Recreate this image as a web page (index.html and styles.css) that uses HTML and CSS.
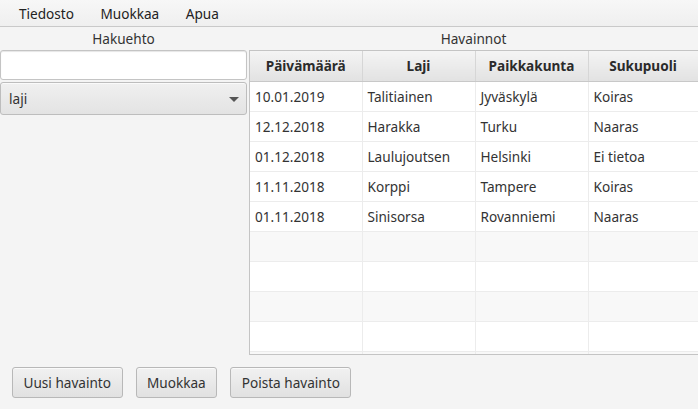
FILE: index.html
```html
<!DOCTYPE html>
<html lang="fi">
<head>
<meta charset="utf-8">
<title>Havainnot</title>
<link rel="stylesheet" href="styles.css">
</head>
<body>
<div class="app">
  <nav class="menubar">
    <span class="menu">Tiedosto</span>
    <span class="menu">Muokkaa</span>
    <span class="menu">Apua</span>
  </nav>
  <div class="main">
    <section class="left">
      <div class="caption">Hakuehto</div>
      <input class="field" type="text">
      <div class="combo"><span>laji</span><span class="arrow"></span></div>
    </section>
    <section class="right">
      <div class="caption">Havainnot</div>
      <div class="tablewrap">
        <table class="grid">
          <thead>
            <tr><th class="first">Päivämäärä</th><th>Laji</th><th>Paikkakunta</th><th class="last">Sukupuoli</th></tr>
          </thead>
          <tbody>
            <tr><td>10.01.2019</td><td>Talitiainen</td><td>Jyväskylä</td><td>Koiras</td></tr>
            <tr><td>12.12.2018</td><td>Harakka</td><td>Turku</td><td>Naaras</td></tr>
            <tr><td>01.12.2018</td><td>Laulujoutsen</td><td>Helsinki</td><td>Ei tietoa</td></tr>
            <tr><td>11.11.2018</td><td>Korppi</td><td>Tampere</td><td>Koiras</td></tr>
            <tr><td>01.11.2018</td><td>Sinisorsa</td><td>Rovanniemi</td><td>Naaras</td></tr>
            <tr class="empty odd"><td></td><td></td><td></td><td></td></tr>
            <tr class="empty"><td></td><td></td><td></td><td></td></tr>
            <tr class="empty odd"><td></td><td></td><td></td><td></td></tr>
            <tr class="empty"><td></td><td></td><td></td><td></td></tr>
            <tr class="empty odd"><td></td><td></td><td></td><td></td></tr>
          </tbody>
        </table>
      </div>
    </section>
  </div>
  <div class="buttons">
    <button class="btn">Uusi havainto</button>
    <button class="btn">Muokkaa</button>
    <button class="btn">Poista havainto</button>
  </div>
</div>
</body>
</html>
```
FILE: styles.css
```css
* { box-sizing: border-box; }
html, body { margin: 0; padding: 0; }
body {
  background: #f4f4f4;
  font-family: "Noto Sans", "Open Sans", sans-serif;
  font-size: 13.6px;
  color: #333333;
  width: 698px;
  height: 409px;
  overflow: hidden;
}
.app { display: flex; flex-direction: column; height: 409px; }
.menubar {
  height: 27px;
  display: flex;
  align-items: center;
  padding-left: 6px;
  background: linear-gradient(#f7f7f7, #efefef);
  border-bottom: 1px solid #c9c9c9;
}
.menu { padding: 0 13.5px 0 13px; color: #222; }
.main { display: flex; gap: 2px; }
.left { width: 247px; flex: none; display: flex; flex-direction: column; }
.right { flex: 1; overflow: hidden; display: flex; flex-direction: column; }
.caption {
  height: 23px;
  display: flex;
  align-items: center;
  justify-content: center;
  color: #333;
}
.field {
  display: block;
  width: 247px;
  height: 30px;
  margin: 0;
  border: 1px solid #c4c4c4;
  border-radius: 3px;
  background: #fff;
  box-shadow: inset 0 1px 1px #e6e6e6;
  outline: none;
  font: inherit;
}
.combo {
  margin-top: 2px;
  height: 33px;
  border: 1px solid #bdbdbd;
  border-radius: 3px;
  background: linear-gradient(#f0f0f0, #e3e3e3);
  box-shadow: inset 0 1px 0 #fafafa;
  display: flex;
  align-items: center;
  justify-content: space-between;
  padding: 0 7px 0 8px;
}
.arrow {
  width: 0; height: 0;
  border-left: 5px solid transparent;
  border-right: 5px solid transparent;
  border-top: 5px solid #555;
  margin-top: 1px;
}
.tablewrap {
  width: 470px;
  height: 305px;
  border: 1px solid #c4c4c4;
  border-right: none;
  background: #fff;
  overflow: hidden;
}
.grid { border-collapse: collapse; table-layout: fixed; width: 470px; }
.grid th {
  height: 30px;
  width: 113px;
  font-weight: bold;
  text-align: center;
  background: linear-gradient(#f4f4f4, #e2e2e2);
  border-right: 1px solid #d6d6d6;
  border-bottom: 1px solid #c8c8c8;
  padding: 0;
  color: #2b2b2b;
}
.grid th.first { width: 112px; }
.grid th.last { width: 132px; padding-right: 22px; }
.grid td {
  height: 30px;
  padding: 0 0 0 5px;
  border-right: 1px solid #ececec;
  border-bottom: 1px solid #ececec;
  background: #fff;
  white-space: nowrap;
}
.grid tr.odd td { background: #f8f8f8; }
.buttons {
  display: flex;
  gap: 13px;
  padding: 12px 0 0 12px;
}
.btn {
  height: 31px;
  padding: 0 10.5px;
  font: inherit;
  color: #333;
  border: 1px solid #b8b8b8;
  border-radius: 3px;
  background: linear-gradient(#f1f1f1, #e1e1e1);
  box-shadow: inset 0 1px 0 #fafafa;
}
```
